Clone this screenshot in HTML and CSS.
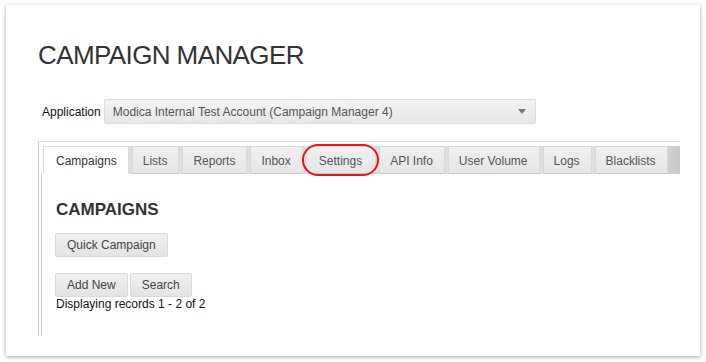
FILE: index.html
```html
<!DOCTYPE html>
<html lang="en">
<head>
    <meta charset="UTF-8">
    <meta name="viewport" content="width=device-width, initial-scale=1.0">
    <title>Campaign Manager</title>
    <link rel="stylesheet" href="styles.css">
</head>
<body>
    <div class="card">
        <h1 class="title">CAMPAIGN MANAGER</h1>
        <div class="app-row">
            <label class="app-label">Application</label>
            <div class="app-select">
                <span>Modica Internal Test Account (Campaign Manager 4)</span>
                <svg class="caret" width="8" height="5" viewBox="0 0 8 5"><path d="M0 0h8L4 5z" fill="#7a7a7a"/></svg>
            </div>
        </div>
        <div class="tabs-wrap">
            <ul class="tabs">
                <li class="tab active">Campaigns</li>
                <li class="tab">Lists</li>
                <li class="tab">Reports</li>
                <li class="tab">Inbox</li>
                <li class="tab marked">Settings</li>
                <li class="tab">API Info</li>
                <li class="tab">User Volume</li>
                <li class="tab">Logs</li>
                <li class="tab">Blacklists</li>
            </ul>
            <div class="panel">
                <h2 class="panel-title">CAMPAIGNS</h2>
                <div class="btn-row quick">
                    <button class="btn">Quick Campaign</button>
                </div>
                <div class="btn-row">
                    <button class="btn">Add New</button>
                    <button class="btn">Search</button>
                </div>
                <p class="records">Displaying records 1 - 2 of 2</p>
            </div>
        </div>
    </div>
</body>
</html>
```

FILE: styles.css
```css
body {
    margin: 0;
    background: #fff;
    font-family: 'Liberation Sans', Arial, Helvetica, sans-serif;
    color: #222;
}
.card {
    margin: 5px 6px;
    width: 694px;
    box-sizing: border-box;
    padding: 35px 20px 20px 32px;
    background: #fff;
    box-shadow: 0 1px 4px rgba(0, 0, 0, 0.35);
}
.title {
    margin: 0 0 29px;
    font-size: 26px;
    line-height: 30px;
    font-weight: normal;
    letter-spacing: -0.6px;
    color: #333;
}
.app-row {
    display: flex;
    align-items: center;
    gap: 3px;
    padding-left: 4px;
    margin-bottom: 17px;
}
.app-label {
    font-size: 12px;
    color: #111;
}
.app-select {
    width: 432px;
    height: 25px;
    box-sizing: border-box;
    display: flex;
    align-items: center;
    justify-content: space-between;
    padding: 0 9px 0 8px;
    font-size: 12px;
    color: #555;
    background: linear-gradient(#f4f4f4, #e7e7e7);
    border: 1px solid #dcdcdc;
    border-radius: 2px;
}
.tabs-wrap {
    border-top: 1px solid #ddd;
    border-left: 1px solid #ccc;
    padding: 4px 0 0 2px;
}
.tabs {
    list-style: none;
    margin: 0;
    padding: 0 0 0 2px;
    display: flex;
    gap: 3px;
    background: linear-gradient(to right, #fff 0, #fff 2px, #dedede 2px, #dedede 94%, #c9c9c9 100%);
}
.tab {
    position: relative;
    height: 28px;
    box-sizing: border-box;
    padding: 1px 11px 0 10px;
    display: flex;
    align-items: center;
    font-size: 12px;
    color: #555;
    background: linear-gradient(#f0f0f0, #e6e6e6);
    border: 1px solid #d8d8d8;
    border-bottom-color: #c8c8c8;
}
.tab.active {
    padding-left: 12px;
    background: #fff;
    color: #333;
    border-color: #ddd;
    border-bottom-color: #fff;
}
.tab.marked {
    padding: 1px 13px 0 12px;
}
.tab.marked::after {
    content: '';
    position: absolute;
    top: -3px;
    bottom: -3px;
    left: -5px;
    right: -4px;
    border: 2px solid #e8141b;
    border-radius: 16px;
}
.panel {
    border-left: 1px solid #ccc;
    padding: 26px 0 24px 14px;
}
.panel-title {
    margin: 0 0 13px;
    font-size: 17px;
    line-height: 20px;
    font-weight: bold;
    color: #333;
}
.btn-row {
    display: flex;
    gap: 2px;
    margin-left: -1px;
}
.btn-row.quick {
    margin-bottom: 16px;
}
.btn {
    height: 24px;
    padding: 0 11px;
    font-family: inherit;
    font-size: 12px;
    color: #444;
    background: linear-gradient(#f1f1f1, #e3e3e3);
    border: 1px solid #dadada;
    border-radius: 2px;
}
.records {
    margin: 0;
    font-size: 12px;
    line-height: 15px;
    color: #111;
}
```
